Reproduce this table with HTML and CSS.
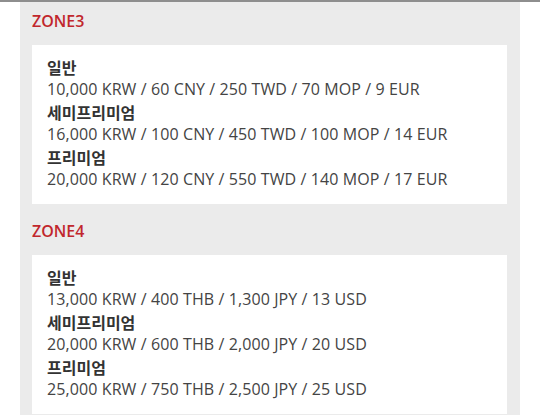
FILE: index.html
```html
<!DOCTYPE html>
<html lang="ko">
<head>
<meta charset="utf-8">
<link rel="stylesheet" href="styles.css">
</head>
<body>
<div class="topline"></div>
<div class="viewport">
  <div class="panel">
    <section class="zone">
      <h2 class="zone-title">ZONE3</h2>
      <div class="card">
        <div class="row"><div class="label">일반</div><div class="price">10,000 KRW / 60 CNY / 250 TWD / 70 MOP / 9 EUR</div></div>
        <div class="row"><div class="label">세미프리미엄</div><div class="price">16,000 KRW / 100 CNY / 450 TWD / 100 MOP / 14 EUR</div></div>
        <div class="row"><div class="label">프리미엄</div><div class="price">20,000 KRW / 120 CNY / 550 TWD / 140 MOP / 17 EUR</div></div>
      </div>
    </section>
    <section class="zone">
      <h2 class="zone-title">ZONE4</h2>
      <div class="card">
        <div class="row"><div class="label">일반</div><div class="price">13,000 KRW / 400 THB / 1,300 JPY / 13 USD</div></div>
        <div class="row"><div class="label">세미프리미엄</div><div class="price">20,000 KRW / 600 THB / 2,000 JPY / 20 USD</div></div>
        <div class="row"><div class="label">프리미엄</div><div class="price">25,000 KRW / 750 THB / 2,500 JPY / 25 USD</div></div>
      </div>
    </section>
  </div>
</div>
</body>
</html>
```
FILE: styles.css
```css
html, body {
  margin: 0;
  padding: 0;
  background: #ffffff;
}
body {
  font-family: "Open Sans", "Noto Sans CJK KR", sans-serif;
  color: #333333;
  height: 415px;
  overflow: hidden;
}
.topline {
  height: 2px;
  background: #8e8e8e;
}
.viewport {
  height: 413px;
  overflow: hidden;
}
.panel {
  margin: -8px 20px 0 20px;
  background: #ebebeb;
  padding: 0 13px 20px 12px;
}
.zone-title {
  margin: 0;
  padding: 17px 0 14px 0;
  font-size: 16px;
  line-height: 20px;
  font-weight: 600;
  color: #c1272d;
}
.card {
  background: #ffffff;
  padding: 11px 15px 13px 15px;
}
.row {
  display: flex;
  flex-direction: column;
}
.label {
  font-family: "Noto Sans CJK KR", sans-serif;
  font-size: 16px;
  font-weight: 700;
  line-height: 22px;
  color: #333333;
}
.price {
  font-size: 16px;
  line-height: 23px;
  letter-spacing: 0.1px;
  color: #444444;
}
```
